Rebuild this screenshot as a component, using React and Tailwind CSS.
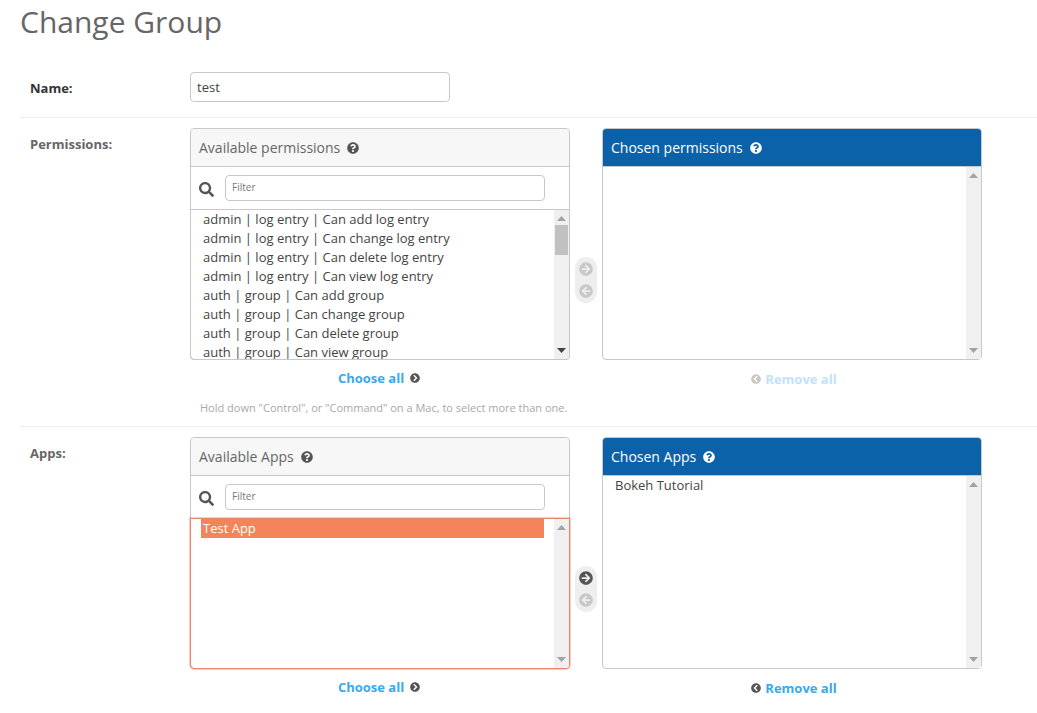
import {
  FaQuestionCircle,
  FaSearch,
  FaArrowCircleRight,
  FaArrowCircleLeft,
  FaChevronCircleRight,
  FaChevronCircleLeft,
} from 'react-icons/fa';

const PERMISSIONS = [
  'admin | log entry | Can add log entry',
  'admin | log entry | Can change log entry',
  'admin | log entry | Can delete log entry',
  'admin | log entry | Can view log entry',
  'auth | group | Can add group',
  'auth | group | Can change group',
  'auth | group | Can delete group',
  'auth | group | Can view group',
];

const Scrollbar = ({ thumb, up = '#a3a3a3', down = '#a3a3a3' }) => (
  <div className="flex w-[15px] shrink-0 flex-col items-center bg-[#f0f0f0]">
    <svg width="9" height="5" viewBox="0 0 9 5" className="mt-[6px] shrink-0">
      <path d="M4.5 0L9 5H0z" fill={up} />
    </svg>
    {thumb ? <div className="mt-[4px] h-[30px] w-[13px] bg-[#c1c1c1]" /> : null}
    <svg width="9" height="5" viewBox="0 0 9 5" className="mt-auto mb-[6px] shrink-0">
      <path d="M0 0H9L4.5 5z" fill={down} />
    </svg>
  </div>
);

const Available = ({ title, focused, thumb, downColor, children }) => (
  <div className="flex h-[232px] w-[380px] shrink-0 flex-col rounded-[4px] border border-[#c8c8c8]">
    <div className="flex h-[38px] shrink-0 items-center gap-[7px] rounded-t-[4px] border-b border-[#c8c8c8] bg-[#f7f7f7] px-[8px] text-[14px] text-[#666]">
      {title}
      <FaQuestionCircle className="text-[12px] text-[#555]" />
    </div>
    <div className="flex h-[42px] shrink-0 items-center pl-[8px]">
      <FaSearch className="mt-[3px] text-[15px] text-[#555]" />
      <input
        readOnly
        placeholder="Filter"
        className="mt-[-1px] ml-[11px] h-[26px] w-[320px] rounded-[4px] border border-[#c8c8c8] px-[6px] pb-[2px] text-[10px] outline-none placeholder:text-[#777]"
      />
    </div>
    <div
      className={`-mx-px -mb-px flex min-h-0 flex-1 overflow-hidden rounded-b-[4px] border ${
        focused ? 'border-[#e8866a] shadow-[0_0_1px_1px_rgba(232,134,106,0.4)]' : 'border-[#c8c8c8]'
      }`}
    >
      <div className="min-w-0 flex-1 overflow-hidden text-[13px] leading-[19px] text-[#444]">
        {children}
      </div>
      <Scrollbar thumb={thumb} down={downColor} />
    </div>
  </div>
);

const Chosen = ({ title, children }) => (
  <div className="flex h-[232px] w-[380px] shrink-0 flex-col rounded-[4px] border border-[#c8c8c8]">
    <div className="flex h-[37px] shrink-0 items-center gap-[7px] rounded-t-[3px] bg-[#0b62a8] px-[8px] text-[14px] text-white">
      {title}
      <FaQuestionCircle className="text-[12px]" />
    </div>
    <div className="flex min-h-0 flex-1 border-t border-[#c8c8c8]">
      <div className="min-w-0 flex-1 text-[13px] leading-[19px] text-[#444]">{children}</div>
      <Scrollbar />
    </div>
  </div>
);

const Movers = ({ active }) => (
  <div className="mx-[5px] mt-[129px] flex w-[22px] shrink-0 flex-col items-center gap-[8px] self-start rounded-full bg-[#eeeeee] py-[5px]">
    <FaArrowCircleRight className={`text-[14px] ${active ? 'text-[#555]' : 'text-[#c8c8c8]'}`} />
    <FaArrowCircleLeft className="text-[14px] text-[#c8c8c8]" />
  </div>
);

const Selector = ({ available, chosen, focused, active, thumb, downColor, removeActive, list, chosenList }) => (
  <div>
    <div className="flex">
      <Available title={available} focused={focused} thumb={thumb} downColor={downColor}>
        {list}
      </Available>
      <Movers active={active} />
      <Chosen title={chosen}>{chosenList}</Chosen>
    </div>
    <div className="mt-[8px] flex text-[13px] leading-[18px] font-bold">
      <div className="flex w-[380px] items-center justify-center gap-[6px] pr-[2px] text-[#36a9f0]">
        Choose all
        <FaChevronCircleRight className="text-[10px] text-[#555]" />
      </div>
      <div
        className={`ml-[34px] flex w-[380px] items-center justify-center gap-[4px] pt-[2px] ${
          removeActive ? 'text-[#36a9f0]' : 'text-[#bfe3fa]'
        }`}
      >
        <FaChevronCircleLeft className={`text-[10px] ${removeActive ? 'text-[#555]' : 'text-[#c8c8c8]'}`} />
        Remove all
      </div>
    </div>
  </div>
);

export default function App() {
  return (
    <div className="h-[713px] overflow-hidden bg-white pl-[20px] font-['Open_Sans',sans-serif] text-[#444]">
      <h1 className="pt-[2px] text-[30px] leading-[40px] font-normal text-[#666]">Change Group</h1>

      <div className="mt-[30px] flex h-[46px] border-b border-[#eeeeee] pl-[10px]">
        <label className="w-[160px] pt-[7px] text-[13px] leading-[18px] font-bold text-[#333]">Name:</label>
        <input
          readOnly
          value="test"
          className="h-[30px] w-[260px] rounded-[4px] border border-[#c8c8c8] px-[6px] text-[13px] text-[#444] outline-none"
        />
      </div>

      <div className="flex h-[309px] border-b border-[#eeeeee] pt-[10px] pl-[10px]">
        <label className="w-[160px] pt-[7px] text-[13px] leading-[18px] font-bold text-[#666]">Permissions:</label>
        <div>
          <Selector
            available="Available permissions"
            chosen="Chosen permissions"
            thumb
            downColor="#444"
            list={PERMISSIONS.map((p) => (
              <div key={p} className="pl-[12px] whitespace-nowrap">
                {p}
              </div>
            ))}
          />
          <p className="mt-[13px] pl-[10px] text-[11px] leading-[14px] text-[#a8a8a8]">
            Hold down "Control", or "Command" on a Mac, to select more than one.
          </p>
        </div>
      </div>

      <div className="flex pt-[10px] pl-[10px]">
        <label className="w-[160px] pt-[7px] text-[13px] leading-[18px] font-bold text-[#666]">Apps:</label>
        <Selector
          available="Available Apps"
          chosen="Chosen Apps"
          focused
          active
          removeActive
          list={<div className="mr-[10px] ml-[10px] bg-[#f4845a] pl-[2px] text-white">Test App</div>}
          chosenList={<div className="pl-[12px]">Bokeh Tutorial</div>}
        />
      </div>
    </div>
  );
}
